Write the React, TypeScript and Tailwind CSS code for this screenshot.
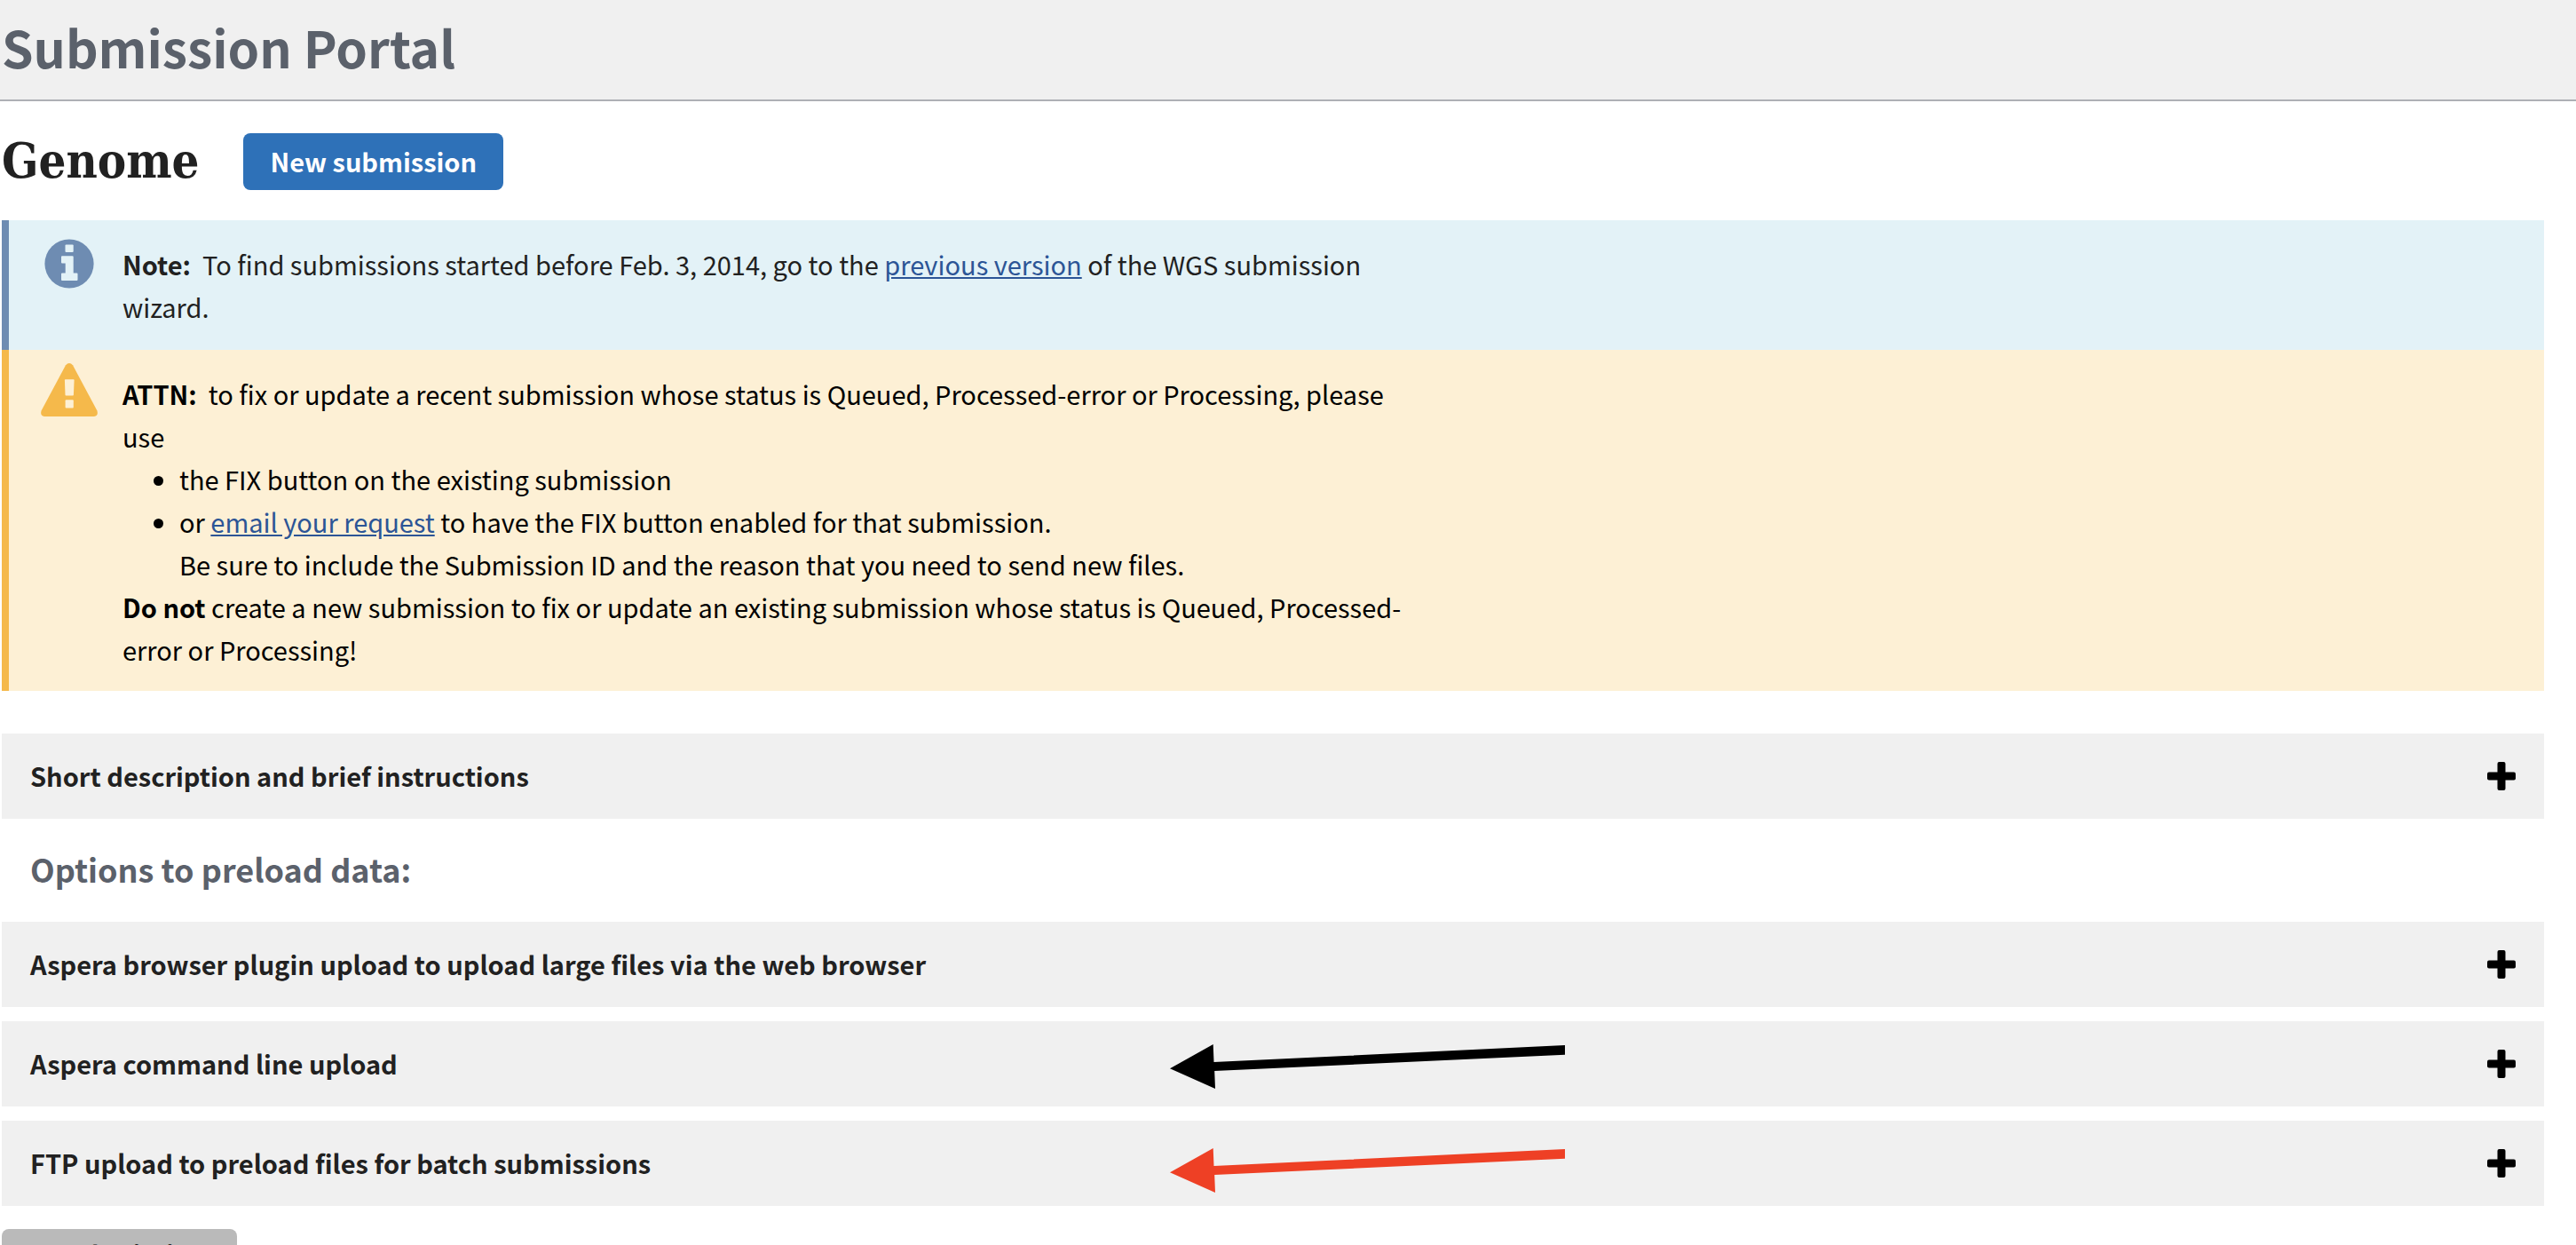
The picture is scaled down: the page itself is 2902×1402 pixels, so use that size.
function InfoIcon() {
  return (
    <svg className="mx-auto mt-[21px] size-14 text-[#6e8cb2]" viewBox="0 0 56 56" aria-hidden="true">
      <circle cx="28" cy="28" r="27.600" fill="currentColor" />
      <rect x="23.500" y="6.500" width="9.200" height="8.500" rx="1" fill="#e3f2f7" />
      <path
        d="M20 19.300H31.700Q32.700 19.300 32.700 20.300V38.500H36.500Q37.500 38.500 37.500 39.500V46Q37.500 47 36.500 47H20Q19 47 19 46V39.500Q19 38.500 20 38.500H23.700V27.500H20Q19 27.500 19 26.500V20.300Q19 19.300 20 19.300Z"
        fill="#e3f2f7"
      />
    </svg>
  );
}

function WarningIcon() {
  return (
    <svg className="mt-[15px] h-[60px] w-16 text-[#f5b94b]" viewBox="0 0 64 60" aria-hidden="true">
      <path
        d="M28 2.300Q32 -2.300 36 2.300L63.300 53.200Q65.300 59 60 60H4Q-1.300 59 0.700 53.200Z"
        fill="currentColor"
      />
      <path d="M27.700 18.200H36.800Q37.600 18.200 37.600 19L36.900 35.800Q36.800 36.600 36 36.600H28.400Q27.600 36.600 27.500 35.800L26.900 19Q26.900 18.200 27.700 18.200Z" fill="#fdf0d5" />
      <rect x="27.600" y="41.200" width="9.200" height="9.400" rx="1" fill="#fdf0d5" />
    </svg>
  );
}

function PlusIcon() {
  return (
    <svg className="size-8 text-black" viewBox="0 0 32 32" fill="currentColor" aria-hidden="true">
      <rect x="11.500" y="0" width="9" height="32" rx="2" />
      <rect x="0" y="11.500" width="32" height="9" rx="2" />
    </svg>
  );
}

function Arrow({ className }: { className: string }) {
  return (
    <svg
      className={`absolute left-[1314px] h-[52px] w-[448px] ${className}`}
      viewBox="0 0 448 52"
      fill="currentColor"
      aria-hidden="true"
    >
      <path d="M2 29.300 50.700 2 51.500 22 447 3V13.700L52.200 32 53 52Z" />
    </svg>
  );
}

function Bar({ title, arrow }: { title: string; arrow?: string }) {
  return (
    <button
      type="button"
      className="relative flex h-24 w-full items-center justify-between bg-[#f0f0f0] px-8 text-left text-[29px] leading-[48px] font-bold text-[#212121]"
    >
      <span className="pb-0.5">{title}</span>
      <PlusIcon />
      {arrow && <Arrow className={arrow} />}
    </button>
  );
}

export default function App() {
  return (
    <div className="h-screen overflow-hidden bg-white font-['Noto_Sans_CJK_SC',sans-serif] text-[#212121]">
      <header className="flex h-[114px] items-center border-b-2 border-[#aeb0b5] bg-[#f0f0f0] pb-2 pl-0.5">
        <h1 className="text-[57px] leading-[72px] font-bold text-[#5b616b]">Submission Portal</h1>
      </header>
      <main className="pr-9 pl-0.5">
        <div className="flex items-center gap-[50px] pt-9 pb-[34px]">
          <h2 className="pb-0.5 font-['DejaVu_Serif_Condensed','DejaVu_Serif',serif] text-[54px] leading-[60px] font-bold">
            Genome
          </h2>
          <button
            type="button"
            className="h-16 rounded-lg bg-[#2e71b8] px-[30px] pb-0.5 text-[29px] leading-[48px] font-bold text-white"
          >
            New submission
          </button>
        </div>
        <section className="flex gap-7 border-l-8 border-[#6e8cb2] bg-[#e3f2f7] pl-9 text-[29px] leading-[48px]">
          <div className="w-16 shrink-0">
            <InfoIcon />
          </div>
          <p className="max-w-[1460px] py-[25px]">
            <strong>Note:</strong>&nbsp; To find submissions started before Feb. 3, 2014, go to the{" "}
            <a href="#previous" className="text-[#2c5596] underline">previous version</a> of the WGS submission wizard.
          </p>
        </section>
        <section className="flex gap-7 border-l-8 border-[#f5b94b] bg-[#fdf0d5] pl-9 text-[29px] leading-[48px] text-black">
          <div className="w-16 shrink-0">
            <WarningIcon />
          </div>
          <div className="max-w-[1460px] pt-[25px] pb-[23px]">
            <p>
              <strong>ATTN:</strong>&nbsp; to fix or update a recent submission whose status is Queued,
              Processed-error or Processing, please use
            </p>
            <ul className="list-disc pl-16">
              <li>the FIX button on the existing submission</li>
              <li>
                or <a href="#email" className="text-[#2c5596] underline">email your request</a> to have the FIX button
                enabled for that submission.
                <br />
                Be sure to include the Submission ID and the reason that you need to send new files.
              </li>
            </ul>
            <p>
              <strong>Do not</strong> create a new submission to fix or update an existing submission whose status is
              Queued, Processed-error or Processing!
            </p>
          </div>
        </section>
        <div className="pt-12">
          <Bar title="Short description and brief instructions" />
        </div>
        <h3 className="px-8 pt-[30px] pb-[34px] text-[36px] leading-[52px] font-bold text-[#5b616b]">
          Options to preload data:
        </h3>
        <div className="flex flex-col gap-4">
          <Bar title="Aspera browser plugin upload to upload large files via the web browser" />
          <Bar title="Aspera command line upload" arrow="top-6 text-black" />
          <Bar title="FTP upload to preload files for batch submissions" arrow="top-[29px] text-[#ee4025]" />
        </div>
        <button
          type="button"
          className="mt-[26px] h-14 rounded-lg bg-[#bababa] px-5 pb-0.5 text-[29px] leading-[48px] font-bold text-[#212121]"
        >
          My submissions
        </button>
      </main>
    </div>
  );
}
